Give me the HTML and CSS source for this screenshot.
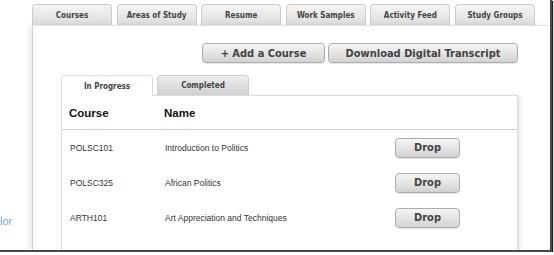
FILE: index.html
```html
<!DOCTYPE html>
<html lang="en">
<head>
  <meta charset="UTF-8">
  <title>My Courses</title>
  <link rel="stylesheet" href="styles.css">
</head>
<body>
  <div class="window">
    <div class="sidebar">
      <a class="side-link" href="#">lor</a>
    </div>

    <div class="main">
      <nav class="tabs">
        <a class="tab" href="#">Courses</a>
        <a class="tab" href="#">Areas of Study</a>
        <a class="tab" href="#">Resume</a>
        <a class="tab" href="#">Work Samples</a>
        <a class="tab" href="#">Activity Feed</a>
        <a class="tab" href="#">Study Groups</a>
      </nav>

      <div class="panel">
        <div class="actions">
          <button class="btn btn-add">+ Add a Course</button>
          <button class="btn btn-transcript">Download Digital Transcript</button>
        </div>

        <div class="subtabs">
          <a class="subtab active" href="#">In Progress</a>
          <a class="subtab" href="#">Completed</a>
        </div>

        <div class="course-list">
          <div class="row head">
            <div>Course</div>
            <div>Name</div>
            <div></div>
          </div>
          <div class="row">
            <div>POLSC101</div>
            <div>Introduction to Politics</div>
            <div><button class="btn btn-drop">Drop</button></div>
          </div>
          <div class="row">
            <div>POLSC325</div>
            <div>African Politics</div>
            <div><button class="btn btn-drop">Drop</button></div>
          </div>
          <div class="row">
            <div>ARTH101</div>
            <div>Art Appreciation and Techniques</div>
            <div><button class="btn btn-drop">Drop</button></div>
          </div>
        </div>
      </div>
    </div>
  </div>
</body>
</html>
```

FILE: styles.css
```css
body {
  margin: 0;
  background: #fff;
  font-family: "Liberation Sans", Arial, sans-serif;
}

.window {
  width: 550px;
  height: 250px;
  display: flex;
  overflow: hidden;
  background: #fff;
  border-right: 2px solid #4a4a4a;
  border-bottom: 2px solid #4a4a4a;
  box-shadow: 1px 1px 1px #1e1e1e;
}

.sidebar {
  width: 32px;
  flex-shrink: 0;
  padding-top: 211px;
}

.side-link {
  color: #76a7cc;
  font-size: 11px;
  text-decoration: none;
}

.main {
  flex: 1;
  display: flex;
  flex-direction: column;
  min-width: 0;
}

.tabs {
  display: flex;
  flex-shrink: 0;
  gap: 4.6px;
  padding-top: 4px;
  height: 21px;
}

.tab,
.subtab,
.btn {
  font-family: "DejaVu Sans Condensed", "DejaVu Sans", sans-serif;
  font-stretch: condensed;
  font-weight: bold;
  color: #444;
  text-decoration: none;
}

.tab {
  width: 80px;
  box-sizing: border-box;
  display: flex;
  align-items: center;
  justify-content: center;
  font-size: 8px;
  border: 1px solid #cdcdcd;
  border-bottom: none;
  border-radius: 4px 4px 0 0;
  background: linear-gradient(#f5f5f5, #dcdcdc);
}

.panel {
  flex: 1;
  min-height: 0;
  overflow: hidden;
  background: #fff;
  border-left: 1px solid #d0d0d0;
  border-top: 1px solid #e2e2e2;
  box-shadow: -3px 0 5px rgba(0, 0, 0, 0.08);
  padding-left: 28px;
  padding-right: 32px;
}

.actions {
  display: flex;
  justify-content: flex-end;
  gap: 3px;
  margin-top: 17px;
}

.btn {
  height: 20px;
  box-sizing: border-box;
  font-size: 11px;
  border: 1px solid #adadad;
  border-radius: 4px;
  background: linear-gradient(#f6f6f6, #d2d2d2);
  box-shadow: 0 1px 1px rgba(0, 0, 0, 0.1);
  padding: 0;
  cursor: pointer;
}

.btn-add {
  width: 123px;
}

.btn-transcript {
  width: 190px;
}

.subtabs {
  display: flex;
  gap: 4px;
  margin-top: 12px;
  height: 20px;
}

.subtab {
  width: 92px;
  box-sizing: border-box;
  display: flex;
  align-items: center;
  justify-content: center;
  font-size: 8px;
  border: 1px solid #cfcfcf;
  border-bottom: none;
  border-radius: 4px 4px 0 0;
  background: linear-gradient(#eeeeee, #d0d0d0);
}

.subtab.active {
  background: #fff;
  border-color: #ddd;
  position: relative;
  z-index: 1;
  margin-bottom: -1px;
  height: 21px;
}

.course-list {
  border: 1px solid #ddd;
  border-bottom: none;
  box-shadow: 2px 1px 4px rgba(0, 0, 0, 0.12);
  height: 200px;
}

.row {
  display: grid;
  grid-template-columns: 95px 230px 65px;
  align-items: center;
  height: 35px;
  padding-left: 8px;
  font-size: 8.5px;
  color: #333;
}

.row.head {
  height: 33px;
  border-bottom: 1px solid #cfcfcf;
  font-size: 11.5px;
  font-weight: bold;
  color: #111;
  padding-left: 7px;
}

.btn-drop {
  width: 65px;
  display: block;
}
```
